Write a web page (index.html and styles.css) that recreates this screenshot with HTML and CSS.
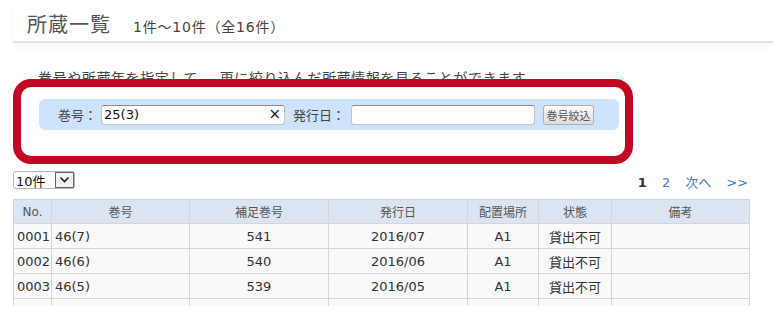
FILE: index.html
```html
<!DOCTYPE html>
<html lang="ja">
<head>
    <meta charset="UTF-8">
    <meta name="viewport" content="width=device-width, initial-scale=1.0">
    <title>所蔵一覧</title>
    <link rel="stylesheet" href="styles.css">
</head>
<body>

    <div class="page-head">
        <h1>所蔵一覧</h1>
        <span class="count">1件～10件（全16件）</span>
    </div>

    <p class="intro">巻号や所蔵年を指定して、　更に絞り込んだ所蔵情報を見ることができます。</p>

    <!-- Highlighted filter area -->
    <div class="filter-box">
        <div class="search-bar">
            <label for="vol">巻号：</label>
            <span class="field">
                <input id="vol" type="text" value="25(3)">
                <span class="clear">&times;</span>
            </span>
            <label for="date" class="second">発行日：</label>
            <span class="field">
                <input id="date" type="text" value="">
            </span>
            <button>巻号絞込</button>
        </div>
    </div>

    <div class="toolbar">
        <div class="per-page">
            <span class="per-page-value">10件</span>
            <span class="per-page-arrow">
                <svg width="11" height="8" viewBox="0 0 11 8"><polyline points="1.5,1.5 5.5,5.5 9.5,1.5" fill="none" stroke="#222" stroke-width="1.6"/></svg>
            </span>
        </div>
        <div class="pager">
            <span class="current">1</span>
            <a href="#">2</a>
            <a href="#">次へ</a>
            <a href="#">&gt;&gt;</a>
        </div>
    </div>

    <div class="table-wrap">
        <table>
            <colgroup>
                <col style="width:38px">
                <col style="width:138px">
                <col style="width:139px">
                <col style="width:139px">
                <col style="width:71px">
                <col style="width:73px">
                <col>
            </colgroup>
            <thead>
                <tr>
                    <th>No.</th>
                    <th>巻号</th>
                    <th>補足巻号</th>
                    <th>発行日</th>
                    <th>配置場所</th>
                    <th>状態</th>
                    <th>備考</th>
                </tr>
            </thead>
            <tbody>
                <tr>
                    <td>0001</td><td>46(7)</td><td class="c">541</td><td class="c">2016/07</td><td class="c">A1</td><td class="c">貸出不可</td><td></td>
                </tr>
                <tr>
                    <td>0002</td><td>46(6)</td><td class="c">540</td><td class="c">2016/06</td><td class="c">A1</td><td class="c">貸出不可</td><td></td>
                </tr>
                <tr>
                    <td>0003</td><td>46(5)</td><td class="c">539</td><td class="c">2016/05</td><td class="c">A1</td><td class="c">貸出不可</td><td></td>
                </tr>
                <tr>
                    <td></td><td></td><td></td><td></td><td></td><td></td><td></td>
                </tr>
            </tbody>
        </table>
    </div>

</body>
</html>
```

FILE: styles.css
```css
body {
    margin: 0;
    font-family: "DejaVu Sans", "Noto Sans CJK JP", sans-serif;
    color: #333;
    background: #fff;
}

/* Page header */
.page-head {
    margin-left: 13px;
    height: 43px;
    box-sizing: border-box;
    padding: 12px 0 0 14px;
    display: flex;
    align-items: baseline;
    border-bottom: 2px solid #e2e2e2;
    box-shadow: 0 4px 6px rgba(0, 0, 0, 0.04);
}
.page-head h1 {
    margin: 0;
    font-family: "Noto Sans CJK JP", sans-serif;
    font-size: 20px;
    font-weight: normal;
    letter-spacing: 1px;
    line-height: 24px;
    color: #555;
}
.count {
    margin-left: 22px;
    font-size: 14px;
    letter-spacing: 0.8px;
    color: #444;
}

.intro {
    margin: 26px 0 0 38px;
    font-size: 14px;
    line-height: 18px;
    letter-spacing: 0.6px;
    color: #444;
}

/* Red highlight box */
.filter-box {
    position: relative;
    margin: -8px 0 0 13px;
    width: 620px;
    box-sizing: border-box;
    background: #fff;
    border: 8px solid #c20820;
    border-radius: 18px;
    padding: 12px 6px 26px 18px;
}
.search-bar {
    height: 31px;
    display: flex;
    align-items: center;
    padding-left: 19px;
    background: #cde2fb;
    border-radius: 6px;
    font-family: "Noto Sans CJK JP", sans-serif;
    font-size: 13px;
    color: #444;
}
.search-bar label {
    margin-right: 4px;
}
.search-bar label.second {
    margin-left: 8px;
    margin-right: 6px;
}
.field {
    position: relative;
    display: inline-flex;
}
.field input {
    width: 184px;
    height: 20px;
    box-sizing: border-box;
    padding: 0 2px;
    border: 1px solid #c4c4c4;
    border-top-color: #8a8a8a;
    border-radius: 3px;
    font-family: "DejaVu Sans", sans-serif;
    font-size: 13px;
    color: #111;
    background: #fff;
}
.clear {
    position: absolute;
    right: 4px;
    top: 0;
    line-height: 19px;
    font-family: "DejaVu Sans", sans-serif;
    font-size: 15px;
    color: #222;
}
button {
    margin-left: 8px;
    width: 51px;
    height: 20px;
    padding: 0;
    border: 1px solid #b0b0b0;
    border-radius: 3px;
    background: linear-gradient(#fbfbfb, #dcdcdc);
    font-family: "Noto Sans CJK JP", sans-serif;
    font-size: 11px;
    color: #555;
}

/* Per page select and pager */
.toolbar {
    margin: 7px 0 0 13px;
    width: 737px;
    display: flex;
    justify-content: space-between;
    align-items: flex-end;
}
.per-page {
    display: flex;
    align-items: center;
    width: 62px;
    height: 18px;
    box-sizing: border-box;
    border: 1px solid #b5b5b5;
    border-radius: 3px;
    font-size: 13px;
    color: #111;
}
.per-page-value {
    padding-left: 2px;
    font-family: "DejaVu Sans", "Noto Sans CJK JP", sans-serif;
}
.per-page-arrow {
    margin-left: auto;
    width: 19px;
    height: 16px;
    box-sizing: border-box;
    border: 1px solid #666;
    background: #f2f2f2;
    display: flex;
    align-items: center;
    justify-content: center;
}
.pager {
    display: flex;
    gap: 15px;
    padding-right: 2px;
    margin-bottom: -3px;
    font-size: 13px;
    line-height: 18px;
}
.pager .current {
    font-weight: bold;
    color: #333;
}
.pager a {
    color: #3d7ccb;
    text-decoration: none;
}

/* Holdings table */
.table-wrap {
    margin: 10px 0 0 13px;
    width: 738px;
    height: 107px;
    overflow: hidden;
}
table {
    width: 737px;
    border-collapse: collapse;
    table-layout: fixed;
    font-size: 13px;
}
th, td {
    border: 1px solid #d6d6d6;
    padding: 0 3px;
    white-space: nowrap;
}
th {
    height: 23px;
    background: #dbe5f1;
    font-weight: normal;
    font-size: 12px;
    color: #555;
}
td {
    height: 24px;
    background: #f9f9f9;
    color: #333;
}
td.c {
    text-align: center;
}
```
